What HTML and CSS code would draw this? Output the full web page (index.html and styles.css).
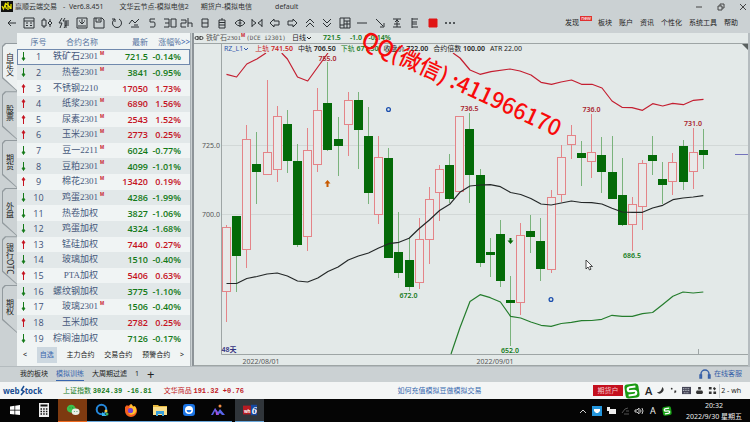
FILE: index.html
```html
<!DOCTYPE html>
<html lang="zh-CN">
<head>
<meta charset="utf-8">
<title>赢顺云端交易</title>
<link rel="stylesheet" href="styles.css">
</head>
<body>
<header class="titlebar">
  <svg class="app-logo" viewBox="0 0 12 11"><path fill="#111" d="M0 0h12v11H0z"/><path stroke="#e8e000" stroke-width="1.3" fill="none" d="M1 5l1.500 3 1.500-4 1.500 4M7 1v8M7 6q2-2 2 2M10 3v5M4 2l4 3"/></svg>
  <span>赢顺云端交易</span><span class="version">- &nbsp;Ver6.8.451</span>
  <span class="node">文华云节点-模拟电信2</span><span class="account">期货户-模拟电信</span><span class="profile">default</span>
  <div class="window-buttons">
    <button aria-label="最小化"><svg viewBox="0 0 8 8"><path d="M1 4h6"/></svg></button>
    <button aria-label="还原"><svg viewBox="0 0 8 8"><path d="M1 3h4v4H1zM3 3V1h4v4H5"/></svg></button>
    <button aria-label="关闭"><svg viewBox="0 0 8 8"><path d="M1 1l6 6M7 1L1 7"/></svg></button>
  </div>
</header>

<div class="toolbar">
  <nav class="tools" id="tools"></nav>
  <nav class="menu">
    <a href="#">发现<span class="new-badge">new</span></a><a href="#">板块</a><a href="#">账户</a><a href="#">资讯</a><a href="#">个性化</a><a href="#">系统工具</a><a href="#">帮助</a>
  </nav>
</div>

<main class="workspace">
  <nav class="side-tabs">
    <button class="active"><span>自定义</span></button>
    <button><span>股票</span></button>
    <button><span>期货</span></button>
    <button><span>外盘</span></button>
    <button><span>银行OTC</span></button>
    <button><span>期权</span></button>
  </nav>

  <section class="quotes">
    <table>
      <thead><tr><th class="dir"></th><th class="idx">序号</th><th class="name">合约名称</th><th class="last">最新</th><th class="chg">涨幅%</th><th class="more">&gt;&gt;</th></tr></thead>
      <tbody id="rows"></tbody>
    </table>
    <nav class="group-tabs">
      <button>&lt;</button><button class="on">自选</button><button>主力合约</button><button>交易合约</button><button>预警合约</button><button>&gt;</button>
    </nav>
  </section>

  <section class="chart">
    <div class="chart-title">
      <svg class="link-icon" viewBox="0 0 10 6"><path d="M4 1.500H2.500a1.500 1.500 0 0 0 0 3H4M6 1.500h1.500a1.500 1.500 0 0 1 0 3H6M3 3h4M5 1v4"/></svg>
      <span class="contract">铁矿石2301<sup>M</sup></span><span class="code">(DCE i2301)</span>
      <span class="period">日线<svg class="caret" viewBox="0 0 6 4"><path d="M1 1l2 2 2-2"/></svg></span>
      <b class="price">721.5</b><b class="delta">-1.0 / -0.14%</b>
    </div>
    <div class="legend">
      <span class="ind">RZ_L1<svg class="caret" viewBox="0 0 6 4"><path d="M1 1l2 2 2-2"/></svg></span>
      <span class="up">上轨 <b>741.50</b></span><span>中轨 <b>706.50</b></span><span class="down">下轨 <b>671.50</b></span><span>收盘价 <b>722.00</b></span><span>合约倍数 <b>100.00</b></span><span>ATR 22.00</span>
      <i class="corner"></i>
    </div>
    <svg class="plot" id="plot" viewBox="194 53 554 313" preserveAspectRatio="xMinYMin meet">
      <path class="grid" d="M222 145.500H748M222 214.500H748"/>
      <path class="axis" d="M221.500 53V354.500H748M698.500 354V349"/>
      <path class="frame" d="M194 365.500H748"/>
      <path class="now" d="M735 154.500H748"/>
      <g id="candles"></g>
      <polyline class="band-up" points="226.500,74.300 236.600,77 246.800,64 256.900,59 266,53"/>
      <polyline class="band-up" points="281.700,53 287.400,59 297.500,77 307.700,81 317.800,67 328,53"/>
      <polyline class="band-up" points="453,53 460,58 470,70 480,74.300 491,71.700 510,69 520,71 531,75 541,82.300 551.500,84.300 561,82 571.500,80 581.500,84.300 592,84.300 602,88 612,101 622,107.300 632,107.700 642.500,110.300 652.700,103.700 662.700,106 672.700,103.300 683.300,104.700 693.500,100.300 703.500,99.300"/>
      <polyline class="band-mid" id="mid"/>
      <polyline class="band-low" id="low"/>
      <g class="labels">
        <g class="red"><text x="327.500" y="61">755.0</text><text x="469.500" y="111">736.5</text><text x="591.500" y="112">736.0</text><text x="693" y="126">731.0</text></g>
        <g class="green"><text x="408.500" y="298">672.0</text><text x="510" y="353">652.0</text><text x="632" y="258">686.5</text></g>
        <g class="scale"><text x="211" y="148">725.0</text><text x="211" y="217">700.0</text><text x="261" y="364">2022/08/01</text><text x="495" y="364">2022/09/01</text></g>
        <text class="days" x="229" y="352">48天</text>
      </g>
      <path fill="#c85a00" d="M327.500 180l3 3.500h-2V187h-2v-3.500h-2z"/>
      <path fill="#066a06" d="M510.500 244l-3-3.500h2V238h2v2.500h2z"/>
      <g fill="none" stroke="#1c4fae" stroke-width="1.300"><circle cx="388.500" cy="109.500" r="1.900"/><circle cx="551" cy="299.500" r="1.900"/></g>
      <path fill="#fff" stroke="#222" stroke-width=".8" d="M586 260v9l2-2 1.500 3 1.500-.8-1.300-2.700h2.800z"/>
    </svg>
    <div class="watermark">QQ(微信) :411966170</div>
  </section>
</main>

<div class="page-tabs">
  <button>我的板块</button><button class="on">模拟训练</button><button>大周期过滤</button><button>1</button><button class="plus" aria-label="新增">+</button>
  <a class="service" href="#"><svg viewBox="0 0 12 10"><path d="M2 6V5a4 4 0 0 1 8 0v1M1 6h1.500v3H1zM9.500 6H11v3H9.500z"/></svg>在线客服</a>
</div>

<footer class="status">
  <span class="brand">web<svg viewBox="0 0 5 11"><path d="M4 1L1.500 5l2.500 1.500L1 10"/></svg>tock</span>
  <span class="index down">上证指数 <b>3024.39 -16.81</b></span>
  <span class="index up">文华商品 <b>191.32 +0.76</b></span>
  <a class="help" href="#">如何充值模拟豆做模拟交易</a>
  <div class="ime">
    <button class="acct">期货户</button>
    <svg class="sogou" viewBox="0 0 16 16"><g transform="rotate(-8 8 8)"><rect x="1" y="1" width="14" height="14" rx="3" fill="#1a9a12"/><path d="M12 4H6.500Q4 4 4 6t2.500 2h3Q12 8 12 10t-2.500 2H4" fill="none" stroke="#fff" stroke-width="2.200"/></g></svg>
    <div class="ime-tools">
      <span class="letter">A</span>
      <svg viewBox="0 0 10 10"><path fill="#333" d="M7 1a4 4 0 1 1-6 6Q6 7 7 1z"/></svg>
      <svg viewBox="0 0 10 10"><circle cx="3" cy="3" r="1" fill="#333"/><path fill="#333" d="M6 5h2v2L6 8z"/></svg>
      <svg viewBox="0 0 10 10"><path fill="#445" d="M0 1h10v8H0z"/><path stroke="#dfe5ea" stroke-dasharray="1 1" d="M1 3h8M1 5h8M2 7.500h6"/></svg>
      <svg viewBox="0 0 10 10"><path fill="#333" d="M3.500 1h3v3h-3zM2 5h6l1 2-1 2H2L1 7z"/></svg>
      <svg viewBox="0 0 10 10"><path fill="#333" d="M1 1h3v3H1zM5.500 2.500L7 1l2 2-2 2zM1 6h3v3H1zM6 6h3v3H6z"/></svg>
    </div>
    <span>2 - wh</span>
  </div>
</footer>

<nav class="taskbar">
  <button aria-label="开始"><svg viewBox="0 0 14 14"><path fill="#fff" d="M2 3.500l4.500-.7v4H2zM7.200 2.700L12 2v4.800H7.200zM2 7.500h4.500v4L2 11zM7.200 7.500H12V12l-4.800-.6z"/></svg></button>
  <button aria-label="计算器"><svg viewBox="0 0 14 14"><path fill="#eee" d="M2 0h10v14H2z"/><path fill="#111" d="M3.500 1.500h7v2h-7z"/><path stroke="#111" stroke-width="1.500" stroke-dasharray="1.500 1.200" d="M3.500 6h8M3.500 8.500h8M3.500 11h8"/></svg></button>
  <button class="alert" aria-label="微信"><svg viewBox="0 0 16 14"><ellipse cx="6" cy="5.500" rx="5" ry="4.500" fill="#3cc04c"/><ellipse cx="11" cy="9" rx="4.500" ry="3.800" fill="#e8efe5"/><path fill="#174" d="M4 4h1v1H4zM7 4h1v1H7zM9 8h1v1H9zM12 8h1v1h-1z"/></svg></button>
  <button class="open" aria-label="搜索"><svg viewBox="0 0 14 14"><circle cx="6.500" cy="6.500" r="4.800" fill="none" stroke="#2488dc" stroke-width="2"/><path fill="#38b8ef" d="M7 9l5 4H7z"/><circle cx="11" cy="8" r="1.500" fill="#f6c63b"/><circle cx="12" cy="11" r="1.500" fill="#40b060"/></svg></button>
  <button class="open" aria-label="Firefox"><svg viewBox="0 0 14 14"><path fill="#f5601e" d="M1 4l2-2 1 1 3-2 1 2q5 0 5 5a6 6 0 0 1-12 0z"/><path fill="#ffc230" d="M7 1q2 1 2 3l2-1q3 5-1 8-4 2-6-1 5 1 5-3-1-3-4-2z"/><circle cx="6.500" cy="7.500" r="2.600" fill="#7542d8"/></svg></button>
  <button class="open" aria-label="文件"><svg viewBox="0 0 14 14"><path fill="#e9b93d" d="M0 2h5l1 1h8v3H0z"/><path fill="#fbe08d" d="M0 4h14v8H0z"/><path fill="#3aa0dc" d="M3 8h8v5H9v-2H5v2H3z"/></svg></button>
  <button class="open" aria-label="浏览器"><svg viewBox="0 0 14 14"><rect x="1" y="1" width="12" height="12" rx="3" fill="#1b74e4"/><circle cx="7" cy="7" r="4" fill="#fff"/><path fill="#1b74e4" d="M4.500 7h5a2.500 2.500 0 0 1-5 0z"/></svg></button>
  <button class="open" aria-label="会议"><svg viewBox="0 0 14 14"><path fill="#5864e8" d="M0 12l4-7 3 4 2-3 5 6h-3l-2-2-2 2-3-4-2 4z"/><circle cx="9" cy="3" r="1.500" fill="#f08d46"/><path fill="#a34edb" d="M4 5l4 7H5z"/></svg></button>
  <button class="open current" aria-label="wh6"><svg viewBox="0 0 16 14"><path fill="#b81b22" d="M0 2h9v10H0z"/><path fill="#1749a0" d="M9 1h7v12H9z"/><text x="1" y="10" class="wh">wh</text><text x="10" y="12" class="six">6</text></svg></button>
  <div class="tray">
    <svg viewBox="0 0 10 10"><path class="ln" d="M2 7l3-3 3 3"/></svg>
    <svg viewBox="0 0 10 10"><path fill="#2496dd" d="M0 0h10v10H0z"/><path fill="#fff" d="M2 3h6v2L6 7H4L2 5z"/></svg>
    <svg viewBox="0 0 10 10"><path fill="#eee" d="M3 3h7v5H3zM1 1h3v4H1z"/></svg>
    <svg viewBox="0 0 10 10"><path class="dim" d="M2 7l3-4 3-1M6 5h3M4 8h5"/></svg>
    <svg viewBox="0 0 10 10"><path class="ln" d="M1 4h2l2-2v6L3 6H1zM6.500 3.500q1 1.500 0 3M8 2q2 3 0 6"/></svg>
    <span class="lang">A</span>
    <svg viewBox="0 0 16 16"><g transform="rotate(-8 8 8)"><rect x="1" y="1" width="14" height="14" rx="3" fill="#17a315"/><path d="M12 4H6.500Q4 4 4 6t2.500 2h3Q12 8 12 10t-2.500 2H4" fill="none" stroke="#fff" stroke-width="2.200"/></g></svg>
    <div class="clock"><span>20:32</span><span>2022/9/30 星期五</span></div>
  </div>
</nav>
<script src="app.js"></script>
</body>
</html>
```
FILE: styles.css
```css
* { box-sizing: border-box; }
html, body { height: 100%; }
body {
  margin: 0;
  display: flex;
  flex-direction: column;
  overflow: hidden;
  background: #cbd1d3;
  color: #222;
  font: 7px/10px "Noto Sans", "Noto Sans CJK SC", sans-serif;
}
button { border: 0; padding: 0; margin: 0; background: none; color: inherit; font: inherit; white-space: nowrap; }
a { color: inherit; text-decoration: none; }
svg { display: block; }

/* title bar */
.titlebar { display: flex; align-items: center; height: 13px; padding: 0 2px 0 1px; white-space: nowrap; color: #333; }
.app-logo { width: 12px; height: 11px; margin-right: 2px; }
.version { margin-left: 6px; }
.node { margin-left: 16px; }
.account { margin-left: 12px; }
.profile { margin-left: 23px; }
.window-buttons { margin-left: auto; display: flex; gap: 14px; padding-right: 1px; }
.window-buttons svg { width: 8px; height: 8px; fill: none; stroke: #444; stroke-width: 1; }

/* toolbar */
.toolbar { display: flex; justify-content: space-between; height: 20px; padding: 0 12px 0 3px; }
.tools { flex: 0 1 456px; display: flex; align-items: center; }
.tools button { flex: 1; display: flex; justify-content: center; }
.tools svg { width: 12px; height: 12px; fill: none; stroke: #2c3134; stroke-width: 1; overflow: visible; }
.menu { display: flex; gap: 7px; align-items: center; padding-bottom: 1px; white-space: nowrap; }
.menu a { position: relative; }
.menu a:first-child { margin-right: 12px; }
.new-badge { position: absolute; left: 15px; top: -2px; width: 12px; background: #e03030; color: #fff; font-size: 5px; line-height: 5px; text-align: center; }

/* workspace */
.workspace { flex: 1; min-height: 0; display: grid; grid-template-columns: 17px 174px minmax(0, 1fr); }

.side-tabs { display: flex; flex-direction: column; padding: 10px 0 33px 2px; }
.side-tabs button {
  position: relative;
  flex: 1;
  background: #929a9e;
  clip-path: polygon(0 3px, 3px 0, 100% 0, 100% 100%, 0 calc(100% - 13px));
}
.side-tabs button::before {
  content: "";
  position: absolute;
  inset: 1px 0 1px 1px;
  background: #ccd2d4;
  clip-path: polygon(0 3px, 3px 0, 100% 0, 100% 100%, 0 calc(100% - 13px));
}
.side-tabs .active::before { background: #edf1f1; }
.side-tabs span { position: relative; display: block; margin: 0 auto; padding-bottom: 4px; writing-mode: vertical-rl; line-height: 12px; font-size: 8px; }

.quotes { display: flex; flex-direction: column; background: #f0f4f4; border-right: 1px solid #aab1b4; }
.quotes table { flex: 1; width: 100%; border-collapse: collapse; table-layout: fixed; }
.quotes th, .quotes td { padding: 0; text-align: right; white-space: nowrap; line-height: 13px; }
.quotes th { height: 16px; font-size: 8px; font-weight: 400; color: #58759f; }
.quotes .dir { width: 13px; text-align: center; }
.quotes .idx { width: 17px; text-align: center; font-size: 9px; }
.quotes .name { width: 51px; }
.quotes .last { width: 50px; }
.quotes .chg { width: 33px; }
.quotes th.idx { font-size: 8px; }
.quotes .more { width: 9px; text-align: left; color: #375fa8; }
.quotes td { font: 600 9px/13px "Open Sans", "Noto Sans", sans-serif; color: #3d5077; }
.quotes td.idx { font-weight: 400; }
.quotes td.name { position: relative; font: 400 9px/13px "Liberation Serif", "Noto Sans CJK SC", serif; color: #46597c; }
.quotes td.name sup { position: absolute; left: 100%; top: 1px; margin-left: 2px; font: 700 5px/6px "Liberation Sans", sans-serif; color: #c8232c; }
.quotes tbody tr:nth-child(even) { background: #e2e8e9; }
.quotes tbody tr.selected { outline: 1px solid #7089ad; outline-offset: -1px; }
.quotes td.dir svg { width: 5px; height: 11px; margin: 0 auto; fill: none; stroke: currentColor; }
.quotes tr.rise .dir, .quotes tr.rise .last, .quotes tr.rise .chg { color: #c5121f; }
.quotes tr.fall .dir, .quotes tr.fall .last, .quotes tr.fall .chg { color: #147a18; }
.group-tabs { display: flex; align-items: center; height: 20px; padding: 1px 6px 3px; justify-content: space-between; }
.group-tabs .on { padding: 3px; background: #cdd8e0; color: #3866ae; }

.chart { position: relative; display: flex; flex-direction: column; margin: 0 2px 0 3px; background: #e3e9e8; box-shadow: -2px 0 #8d9498, 2px 0 #b5bcbf; white-space: nowrap; }
.chart-title { display: flex; align-items: center; height: 11px; border-bottom: 1px solid #9ea5a5; }
.link-icon { width: 10px; height: 6px; margin-right: 2px; fill: none; stroke: #444; }
.contract { color: #555; font-family: "Liberation Serif", "Noto Sans CJK SC", serif; }
.contract sup { font: 700 5px/5px "Liberation Sans", sans-serif; color: #c8232c; }
.code { margin-left: 1px; font-family: "DejaVu Sans Mono", monospace; font-size: 6px; color: #555; }
.period { display: flex; align-items: center; margin-left: 6px; }
.caret { width: 6px; height: 4px; fill: none; stroke: currentColor; }
.price { margin-left: 11px; color: #147a18; }
.delta { margin-left: 9px; color: #147a18; }
.legend { position: relative; display: flex; gap: 5px; height: 9px; line-height: 9px; margin-left: 27px; border-left: 1px solid #9ea5a5; padding-left: 2px; }
.legend .ind { display: flex; align-items: center; color: #3158ac; margin-right: 1px; }
.legend .up { color: #cb1f26; }
.legend .down { color: #147a18; }
.legend b, .price, .delta { font-weight: 600; }
.corner { position: absolute; right: 0; top: 0; border-top: 6px solid #59605f; border-left: 6px solid transparent; }
.plot { flex: 1; width: 100%; min-height: 0; }
.grid { stroke: #d2d8d7; fill: none; }
.axis, .frame { stroke: #9ea5a5; fill: none; }
.now { stroke: #7474bc; }
.candle-up { stroke: #e48488; fill: #e9e9e9; }
.candle-down { fill: #046a08; }
.wick-up { stroke: #e48488; }
.wick-down { stroke: #7ab37c; }
.band-up, .band-mid, .band-low { fill: none; stroke-width: 1.2; stroke-linejoin: round; }
.band-up { stroke: #c41f31; }
.band-mid { stroke: #242828; }
.band-low { stroke: #257d2d; }
.labels text { font: 600 7px "Noto Sans", "Noto Sans CJK SC", sans-serif; text-anchor: middle; }
.red { fill: #a91e2c; }
.green { fill: #147a18; }
.labels .scale text { font-weight: 400; fill: #555; }
.labels .days { fill: #33337f; }
.watermark { position: absolute; left: 170px; top: -9px; transform: rotate(25deg); transform-origin: 0 50%; color: #f80b0b; font: 500 22px/24px "Noto Sans CJK SC", sans-serif; }

/* page tabs and status */
.page-tabs { display: flex; align-items: center; gap: 8px; height: 16px; padding: 0 8px 1px 20px; border-top: 1px solid #b4bbbe; }
.page-tabs .on { color: #3866ae; border-bottom: 1px solid #3866ae; height: 14px; }
.page-tabs .plus { font-size: 13px; }
.service { display: flex; align-items: center; gap: 3px; margin-left: auto; color: #355fa8; }
.service svg { width: 12px; height: 10px; fill: none; stroke: #355fa8; stroke-width: 1.4; }
.status { display: flex; align-items: center; height: 17px; padding: 0 9px 0 3px; background: #f3f5f5; white-space: nowrap; }
.brand { display: flex; align-items: center; width: 60px; color: #184e94; font: 700 8px/12px "Open Sans", sans-serif; }
.brand svg { width: 5px; height: 11px; fill: none; stroke: #184e94; stroke-width: 1.5; }
.index b { font: 700 7px "Liberation Mono", monospace; }
.index.down { color: #147a18; }
.index.up { color: #c01824; margin-left: 12px; }
.help { margin: 0 auto; padding-left: 42px; color: #3467ae; }
.ime { display: flex; align-items: center; }
.acct { width: 30px; height: 11px; background: #c4101e; color: #f4c8ca; }
.sogou { width: 16px; height: 16px; margin: 0 1px; }
.ime-tools { display: flex; align-items: center; gap: 4px; padding: 0 2px 0 4px; margin-right: 1px; border-right: 1px solid #c6cccf; }
.ime-tools svg { width: 9px; height: 9px; }
.letter { font: 600 11px/14px "Open Sans", sans-serif; }

/* taskbar */
.taskbar { display: flex; height: 23px; background: #050505; color: #eee; }
.taskbar button { flex: 0 0 29px; display: flex; align-items: center; justify-content: center; border-bottom: 1px solid transparent; }
.taskbar button svg { width: 14px; height: 14px; }
.taskbar .alert { background: #7d3a10; border-bottom-color: #ee6a20; }
.taskbar .open { border-bottom: 1px solid #6aa8dc; }
.taskbar .current { margin-left: 3px; background: #30353a; }
.wh { font: 700 5px "Open Sans", sans-serif; fill: #fff; }
.six { font: italic 700 12px "Liberation Serif", serif; fill: #fff; }
.tray { margin-left: auto; display: flex; align-items: center; gap: 4px; padding-right: 8px; }
.tray svg { width: 10px; height: 10px; }
.ln, .dim { fill: none; stroke: #ccc; }
.dim { stroke: #555; }
.lang { width: 10px; font-size: 9px; text-align: center; }
.clock { display: flex; flex-direction: column; align-items: center; margin-left: 10px; line-height: 11px; }
```
FILE: app.js
```js
const quotes = [
  ["铁矿石2301", 1, "721.5", "-0.14%"], ["热卷2301", 1, "3841", "-0.95%"],
  ["不锈钢2210", 0, "17050", "1.73%"], ["纸浆2301", 1, "6890", "1.56%"],
  ["尿素2301", 1, "2543", "1.52%"], ["玉米2301", 1, "2773", "0.25%"],
  ["豆一2211", 1, "6024", "-0.77%"], ["豆粕2301", 1, "4099", "-1.01%"],
  ["棉花2301", 1, "13420", "0.19%"], ["鸡蛋2301", 1, "4286", "-1.99%"],
  ["热卷加权", 0, "3827", "-1.06%"], ["鸡蛋加权", 0, "4324", "-1.68%"],
  ["锰硅加权", 0, "7440", "0.27%"], ["玻璃加权", 0, "1510", "-0.40%"],
  ["PTA加权", 0, "5406", "0.63%"], ["螺纹钢加权", 0, "3775", "-1.10%"],
  ["玻璃2301", 1, "1506", "-0.40%"], ["玉米加权", 0, "2782", "0.25%"],
  ["棕榈油加权", 0, "7126", "-0.17%"]
];
const arrowUp = '<svg viewBox="0 0 5 11"><path d="M2.5 10V2M1 4l1.500-2.500L4 4z"/></svg>';
const arrowDown = '<svg viewBox="0 0 5 11"><path d="M2.500 1v8M1 7l1.500 2.500L4 7z"/></svg>';
document.getElementById("rows").innerHTML = quotes.map(([name, main, last, chg], i) => {
  const fall = chg[0] === "-";
  return `<tr class="${fall ? "fall" : "rise"}${i ? "" : " selected"}"><td class="dir">${fall ? arrowDown : arrowUp}</td>` +
    `<td class="idx">${i + 1}</td><td class="name">${name}${main ? "<sup>M</sup>" : ""}</td>` +
    `<td class="last">${last}</td><td class="chg">${chg}</td><td class="more"></td></tr>`;
}).join("");

const tools = [
  ["返回", "M10 6H2M5 3L2 6l3 3"],
  ["报价", "M1 1h10v10H1zM1 4h10M3 6h2M7 6h2M3 8.500h2M7 8.500h2"],
  ["K线", "M3 1v2M3 9v2M1 3h4v6H1zM9 2v2M9 8v2M7 6l2-2 2 2-2 2z"],
  ["闪电", "M4 1L1 6h3l-2 5M7 1L5 4h6M6 6h5M8 4v7M6 8h5M6 11l2-3"],
  ["下载", "M1 1h10v10H1zM6 2v5M4 5l2 2 2-2M2 9h8M3 4h1M8 4h1"],
  ["保存", "M1 1h8l2 2v8H1zM3 1v4h5V1M6 2v2"],
  ["刷新", "M4 2a4.500 4.500 0 1 0 4 0M4 5V2H1"],
  ["画线", "M1 7l3-4 3 3 4-4M3 10h8M6 8h4"],
  ["5分", "M9 2H4v3h4q1 0 1 2v1q0 2-1 2H4"],
  ["30分", "M0 2h5v8H0M1 6h4M7 2h5v8H7z"],
  ["2小时", "M0 3h5v3H0v4h5M7 1v9M7 6h4v4"],
  ["日", "M3 2h6v8H3zM3 6h6"],
  ["自", "M3 3h6v8H3zM3 5.500h6M3 8h6M6 1v2"],
  ["查看", "M1 6q5-6 10 0-5 6-10 0M6 2v8M4.500 6h3"],
  ["缩放", "M1 2v8M11 2v8M1 3l4 3-4 3M11 3L7 6l4 3"],
  ["左移", "M1 6l4-4v2h5v4H5v2z"],
  ["右移", "M11 6L7 2v2H2v4h5v2z"],
  ["上翻", "M2 6l4-4 4 4M2 10l4-4 4 4"],
  ["下翻", "M2 2l4 4 4-4M2 6l4 4 4-4"],
  ["布局", "M1 1h10v10H1zM5 1v10M5 4h6M5 7h6M8 4v7M1 8h4"],
  ["横线", "M1 6h10"],
  ["箭头", "M2 2l7 7M10 6v4H6"],
  ["文字线", "M2 2h8M2 10h8M6 2v8M4 5l2-2 2 2M3 7h6"],
  ["刻度", "M3 1v10M3 2h6M3 5h5M3 7h5M3 10h6"],
  ["颜色", null],
  ["更多", "dots"]
];
document.getElementById("tools").innerHTML = tools.map(([label, d]) => {
  let shape = `<path d="${d}"/>`;
  if (d === null) shape = '<path d="M2 2h8v8H2z" fill="#e01414" stroke="#e01414"/>';
  if (d === "dots") shape = '<path d="M1 6h2M5 6h2M9 6h2" stroke-width="1.500"/>';
  return `<button aria-label="${label}"><svg viewBox="0 0 12 12">${shape}</svg></button>`;
}).join("");

/* direction, body top, body bottom, high, low */
const candles = [
  [1,227,291,225,322],[0,216,256,216,292],[1,139,249,125,268],[0,164,172,132,204],
  [1,152,174,80,174],[1,116,169,106,182],[0,124,161,110,173],[0,161,245,144,247],
  [1,150,236,128,251],[1,110,164,88,172],[0,103,150,62,151],[0,139,146,117,176],
  [1,100,124,92,156],[0,100,130,92,169],[0,136,193,107,204],[1,157,214,136,224],
  [0,158,258,148,258],[0,252,273,212,278],[0,260,287,238,291],[1,239,282,218,289],
  [1,199,239,187,264],[1,169,192,165,221],[0,165,199,154,203],[1,116,191,116,191],
  [0,129,175,113,203],[0,175,263,169,267],[0,252,255,238,277],[0,234,281,220,287],
  [0,300,303,276,346],[1,235,302,223,315],[0,231,237,215,253],[0,241,269,218,281],
  [1,197,269,190,273],[1,157,194,145,202],[1,135,144,125,159],[0,153,158,141,186],
  [1,152,161,114,178],[0,155,172,137,193],[0,172,199,136,199],[0,195,225,158,226],
  [1,204,224,197,251],[1,163,206,160,230],[0,155,161,136,175],[0,179,185,162,204],
  [1,162,181,153,195],[0,146,182,140,190],[1,152,171,128,189],[0,150,155,129,169]
];
const xAt = i => 226.5 + i * 10.145;
document.getElementById("candles").innerHTML = candles.map(([up, top, bottom, high, low], i) => {
  const x = Math.floor(xAt(i)) + 0.5;
  if (up) {
    return `<path class="wick-up" d="M${x} ${high}V${top}M${x} ${bottom}V${low}"/>` +
      `<rect class="candle-up" x="${x - 4}" y="${top + 0.5}" width="8" height="${bottom - top}"/>`;
  }
  return `<path class="wick-down" d="M${x} ${high}V${low}"/>` +
    `<rect class="candle-down" x="${x - 4.5}" y="${top}" width="9" height="${bottom - top}"/>`;
}).join("");

const line = (values, start) => values.map((y, i) => `${xAt(start + i)},${y}`).join(" ");
document.getElementById("mid").setAttribute("points", line([
  283.5,283.5,278.5,276.5,274,273,276,281,282,278,271.5,267,260,256,253,248,243.7,242.3,238.3,228.5,220,210.5,
  204.3,192.3,186,185,184.7,186.7,192.5,194.5,198.5,204,205,203,201,202.5,202.7,204,208.3,212,212.3,212.3,208,
  205.3,199.7,198,197,195.7], 0));
document.getElementById("low").setAttribute("points", "451,354 " + line([
  328,301.5,294.7,297.7,302,316.3,318,322,325.3,326.3,323.5,322.3,320.7,320.5,319.3,315.3,316.3,316.3,313.7,
  312.5,304.5,296.3,292,293,292], 23));
```
